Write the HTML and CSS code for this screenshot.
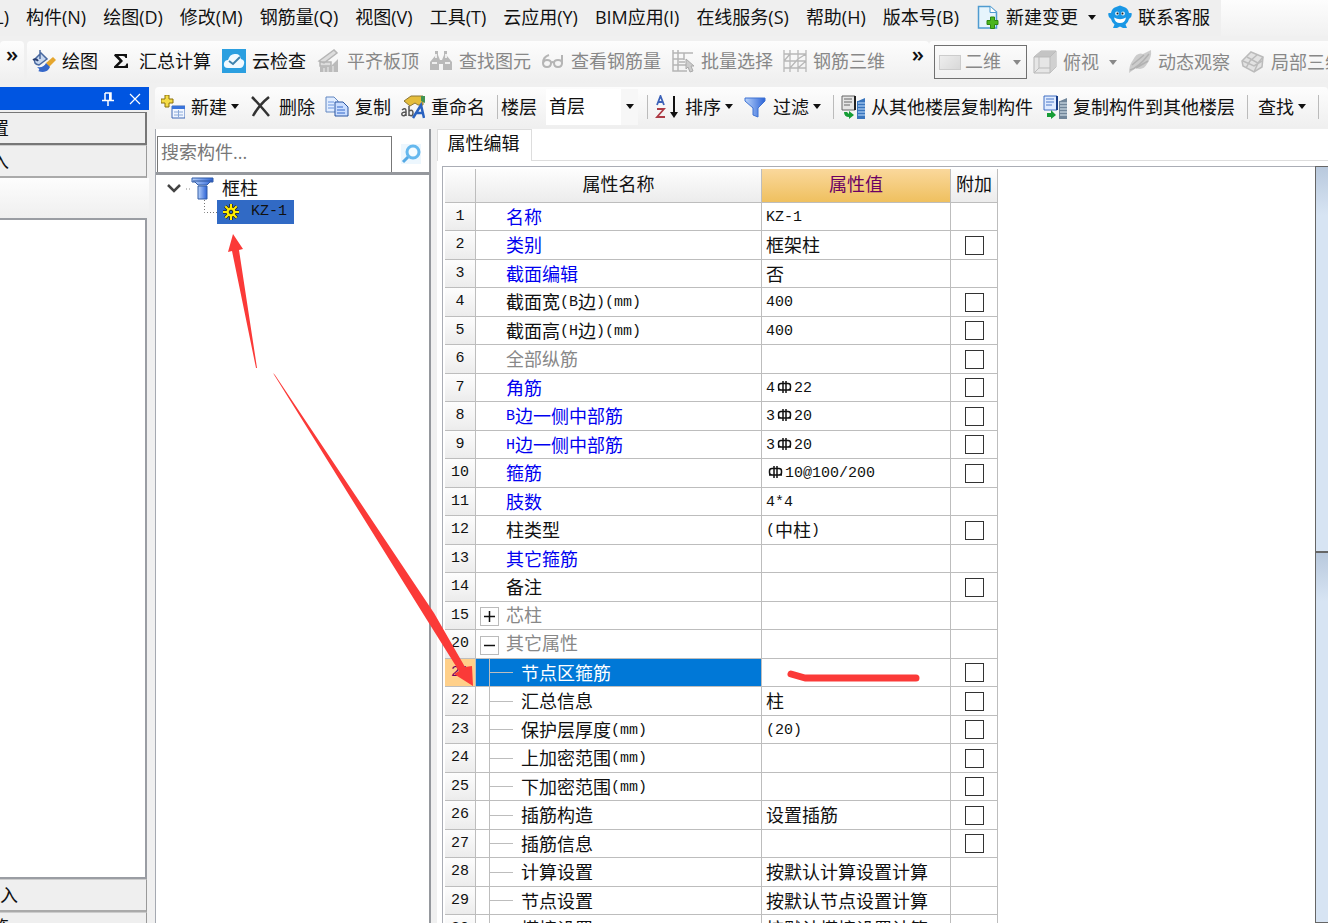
FILE: index.html
```html
<!DOCTYPE html>
<html lang="zh-CN">
<head>
<meta charset="utf-8">
<title>属性编辑</title>
<link rel="stylesheet" href="styles.css">
</head>
<body>
<svg class="defs" aria-hidden="true">
  <defs>
    <linearGradient id="blue" x1="0" x2="1"><stop offset="0" stop-color="#b9d3fb"/><stop offset="1" stop-color="#2c63d6"/></linearGradient>
    <symbol id="rebar" viewBox="0 0 19 16"><path d="M6 4.500H13Q15.500 4.500 15.500 7V8.500Q15.500 11 13 11H6Q3.500 11 3.500 8.500V7Q3.500 4.500 6 4.500ZM8 2V14M11 2V14M3 11H16" fill="none" stroke="#111" stroke-width="1.500"/></symbol>
  </defs>
</svg>

<nav class="menubar">
  <div class="menu-items">
    <button class="cut">L)</button>
    <button>构件(N)</button><button>绘图(D)</button><button>修改(M)</button><button>钢筋量(Q)</button><button>视图(V)</button><button>工具(T)</button><button>云应用(Y)</button><button>BIM应用(I)</button><button>在线服务(S)</button><button>帮助(H)</button><button>版本号(B)</button>
    <button class="tool menu-tool"><svg class="icon" viewBox="0 0 24 24"><path d="M2.500 1.500H14L20.500 7V23H2.500Z" fill="#e6f4fc" stroke="#4f9bd0" stroke-width="1.500"/><path d="M14 1.500V7.500H20.500" fill="#fff" stroke="#4f9bd0"/><path d="M14.500 12H18.500V15.500H22V19.500H18.500V23.500H14.500V19.500H11V15.500H14.500Z" fill="#4cb51c" stroke="#2d8610" stroke-linejoin="round"/></svg>新建变更<i class="caret wide"></i></button>
    <button class="tool"><svg class="icon" viewBox="0 0 24 24"><path d="M3 8Q4 3 8 2L12 0.500L16 2Q20 3 21 8L23.500 8Q24.500 12 21 14Q20 18 17.500 19.500L19 23H15L12 21.500L9 23H5L6.500 19.500Q4 18 3 14Q-0.500 12 0.500 8Z" fill="#1997e5"/><path d="M6 12.500Q12 16 18 12.500Q17 18 12 18Q7 18 6 12.500Z" fill="#fff"/><circle cx="9" cy="8.500" r="2" fill="#d8effc"/><circle cx="15" cy="8.500" r="2" fill="#d8effc"/><circle cx="9.500" cy="8.500" r="1" fill="#222"/><circle cx="14.500" cy="8.500" r="1" fill="#222"/></svg>联系客服</button>
  </div>
</nav>

<div class="toolbar-row">
  <div class="toolbar stub"><button class="more" aria-label="更多">»</button></div>
  <div class="toolbar main-tools">
    <button class="tool"><svg class="icon" viewBox="0 0 24 24"><path d="M8 1V10M3 10L9 4L15 10L7 16Q1 15 3 10Z" fill="#c7d7ef" stroke="#4969a0" stroke-width="1.500"/><path d="M1 11Q4 9 6 12" fill="none" stroke="#283e70" stroke-width="2"/><path d="M14 14L21 8L24 11L17 18Z" fill="#e5a62e"/><path d="M5 18Q12 19 14 14L18 18Q15 25 6 22Q9 21 5 18Z" fill="#3567c9"/></svg>绘图</button>
    <button class="tool"><svg class="icon" viewBox="0 0 24 24"><path d="M6 5H18V9H16.500Q16 7 14 7H9.500L14 12L9 17H15Q17 17 17.500 14.500H19V19H5V17.500L10.500 12L5 6.500Z" fill="#111"/></svg>汇总计算</button>
    <button class="tool"><svg class="icon" viewBox="0 0 24 24"><path d="M0 0H24V24H0Z" fill="#2b9fe0"/><path d="M6 19Q1 19 2 14Q3 11 6 11Q8 4 14 5Q18 5 19 10Q23 11 22 15Q21 19 18 19Z" fill="#f2faff"/><path d="M7 12L11 15L18 8" fill="none" stroke="#3e83ae" stroke-width="2"/></svg>云检查</button>
    <button class="tool" disabled><svg class="icon" viewBox="0 0 24 24"><path d="M2 12L17 1L20 4L7 14ZM3 13H14V17H3Z" fill="#ddd" stroke="#b5b5b5" stroke-width="1.500"/><path d="M3 17H14L21 10V23H3Z" fill="#bbb"/><path d="M7 19V23M11 18V23M16 17V23" stroke="#eee"/></svg>平齐板顶</button>
  </div>
  <div class="toolbar view-tools">
    <button class="tool" disabled><svg class="icon" viewBox="0 0 24 24"><path d="M6 2H9V6L11 11H13L15 6V2H18V7L23 13V21H14V15H10V21H1V13L6 7Z" fill="#b9b9b9"/><path d="M3 14H8M16 14H21M7 5V9M17 5V9" stroke="#eee" stroke-width="2"/></svg>查找图元</button>
    <button class="tool" disabled><svg class="icon" viewBox="0 0 24 24"><path d="M8 6Q2 8 2 14Q2 18 6 18Q10 18 10 14Q10 11 6 11Q3 11 2 14M10 14Q12 12 13 14Q13 18 17 18Q21 18 21 14Q21 11 17 11Q13 11 13 14M21 15V6" fill="none" stroke="#b5b5b5" stroke-width="2"/></svg>查看钢筋量</button>
    <button class="tool" disabled><svg class="icon" viewBox="0 0 24 24"><path d="M2 1V22H16M2 4H22M2 10H13M2 16H15M7 1V22M13 4V11M8 13H14" fill="none" stroke="#b5b5b5" stroke-width="1.500"/><path d="M15 10L23 17H20L22 22L19 23L17 18L15 20Z" fill="#ccc" stroke="#aaa"/></svg>批量选择</button>
    <button class="tool" disabled><svg class="icon" viewBox="0 0 24 24"><path d="M1 1V23M7 1V23M15 1V23M23 1V23M1 5H23M1 12H23M1 19H23M1 12L7 5M7 19L15 10L23 5M15 19L23 12" fill="none" stroke="#b8b8b8" stroke-width="1.300"/></svg>钢筋三维</button>
    <button class="more" aria-label="更多">»</button>
  </div>
  <div class="toolbar camera-tools">
    <label class="mode"><span class="swatch"></span><select disabled aria-label="视图模式"><option>二维</option></select><i class="caret"></i></label>
    <button class="tool" disabled><svg class="icon" viewBox="0 0 24 24"><path d="M1 7L8 1H23V17L17 23H1Z" fill="#e6e6e6" stroke="#b5b5b5"/><path d="M1 7L8 1H23L17 7Z" fill="#c4c4c4"/><path d="M17 7L23 1V17L17 23Z" fill="#d0d0d0"/><path d="M1 7H17V23M17 7L23 1M6 7V18H17M1 23L6 18" fill="none" stroke="#bbb"/></svg>俯视<i class="caret wide"></i></button>
    <button class="tool" disabled><svg class="icon" viewBox="0 0 24 24"><path d="M5 10Q9 2 15 4L23 0Q24 7 19 14Q15 21 8 18L1 23Q1 15 5 10Z" fill="#ccc"/><path d="M2 20Q10 18 21 4M4 15L16 5M8 18L20 11" fill="none" stroke="#b2b2b2" stroke-width="1.500"/></svg>动态观察</button>
    <button class="tool" disabled><svg class="icon" viewBox="0 0 24 24"><path d="M10 2L22 7L21 17L13 22L2 16L1 11Z" fill="#e2e2e2" stroke="#bbb" stroke-width="1.500"/><path d="M6 7L17 13L13 22M16 5L9 11L5 18M2 11L13 16L21 11M17 13L22 7" fill="none" stroke="#bbb" stroke-width="1.500"/></svg>局部三维</button>
  </div>
</div>

<div class="workspace">
  <aside class="modules">
    <header class="dock-title">
      <button aria-label="固定"><svg viewBox="0 0 14 16"><path d="M4 2H10V9M4 2V9M1 9.500H13M7 10V15" fill="none" stroke="#fff" stroke-width="1.500"/><path d="M9 2V9" stroke="#fff" stroke-width="2"/></svg></button>
      <button aria-label="关闭"><svg viewBox="0 0 14 16"><path d="M2 3L12 13M12 3L2 13" stroke="#fff" stroke-width="1.200"/></svg></button>
    </header>
    <button class="module raised"><span class="cut">置</span></button>
    <button class="module"><span class="cut">入</span></button>
    <div class="module-band"></div>
    <div class="module-body"></div>
    <button class="module">入</button>
    <button class="module last"><span class="cut">览</span></button>
  </aside>

  <main class="component">
    <div class="toolbar edit-tools">
      <button class="tool"><svg class="icon" viewBox="0 0 24 24"><path d="M4 0H8V4H12V8H8V12H4V8H0V4H4Z" fill="#f5dc46" stroke="#8b710b"/><path d="M11 11H24V23H11Z" fill="#f1f6ff" stroke="#3e69b5"/><path d="M11 11H24V14H11Z" fill="#3973da"/><path d="M13 17H22M13 20H22M17.500 15V22" stroke="#8aa9d8"/></svg>新建<i class="caret"></i></button>
      <button class="tool"><svg class="icon" viewBox="0 0 24 24"><path d="M3 2Q9 8 20 21M20 2Q10 10 4 21" fill="none" stroke="#333" stroke-width="2.500"/></svg>删除</button>
      <button class="tool"><svg class="icon" viewBox="0 0 24 24"><path d="M1 2H9L13 6V17H1Z" fill="#e1edff" stroke="#6387c1"/><path d="M3 7H9M3 10H9M3 13H9" stroke="#6b95df"/><path d="M10 7H18L23 12V21H10Z" fill="#c9ddff" stroke="#2954a1"/><path d="M12 12H18M12 15H20M12 18H20" stroke="#3569c9"/></svg>复制</button>
      <button class="tool"><svg class="icon" viewBox="0 0 24 24"><path d="M3 6L10 1H22V10H17L14 8L9 11Z" fill="#e5bd3b" stroke="#8c7635"/><path d="M20 1H24V8L20 6Z" fill="#419352"/><path d="M1 15Q5 12 5 16V21M5 17Q0 17 1 20Q3 22 5 19M8 11V21M8 16Q12 14 12 18Q12 22 8 20" fill="none" stroke="#555" stroke-width="1.500"/><path d="M12 23L20 10L23 23M15 18H22" fill="none" stroke="#2962c0" stroke-width="2.500"/></svg>重命名</button>
      <span class="sep"></span>
      <label class="floor">楼层 <span class="floor-box"><select><option>首层</option></select><i class="caret"></i></span></label>
      <span class="sep"></span>
      <button class="tool"><svg class="icon" viewBox="0 0 24 24"><path d="M2 10L5.500 1L9 10M3 7H8" fill="none" stroke="#3c62b8" stroke-width="1.800"/><path d="M2 14H9L2 22H10" fill="none" stroke="#ad3b45" stroke-width="1.800"/><path d="M19 1V20" stroke="#111" stroke-width="2"/><path d="M15 17H23L19 23Z" fill="#111"/></svg>排序<i class="caret"></i></button>
      <button class="tool"><svg class="icon" viewBox="0 0 24 24"><path d="M2 3H22V6L15 13V22L10 20V13L2 6Z" fill="url(#blue)" stroke="#3f73d3"/></svg>过滤<i class="caret"></i></button>
      <span class="sep"></span>
      <button class="tool"><svg class="icon" viewBox="0 0 24 24"><path d="M1 1H14V15H1Z" fill="#e5e5e5" stroke="#666"/><path d="M3 4H11M3 7H11M3 10H9" stroke="#666"/><path d="M14 1V15" stroke="#222" stroke-width="2"/><path d="M3 17H6L8 19V16L13 20L8 24V22Q3 22 3 17Z" fill="#169d36"/><path d="M17 6L24 3V24H16V6Z" fill="#3975bd"/><path d="M17 8H24M17 11H24M17 14H24M17 17H24M17 20H24" stroke="#c6e2ff"/></svg>从其他楼层复制构件</button>
      <button class="tool"><svg class="icon" viewBox="0 0 24 24"><path d="M1 1H14V15H1Z" fill="#dfebff" stroke="#416fc2"/><path d="M3 4H11M3 7H11M3 10H9" stroke="#4c79c7"/><path d="M14 1V15" stroke="#173c86" stroke-width="2"/><path d="M4 14V18H8V15L13 20L8 24V22H4Z" fill="#169d36"/><path d="M17 6L24 3V24H16V6Z" fill="#71869a"/><path d="M17 8H24M17 11H24M17 14H24M17 17H24M17 20H24" stroke="#e1edf5"/></svg>复制构件到其他楼层</button>
      <span class="sep"></span>
      <button class="tool find">查找<i class="caret"></i></button>
      <span class="sep"></span>
    </div>

    <div class="panes">
      <section class="tree-pane">
        <form class="search">
          <input type="search" placeholder="搜索构件..." aria-label="搜索构件">
          <button type="button" aria-label="搜索"><svg class="icon" viewBox="0 0 24 24"><path d="M2 2H22V22H2Z" fill="#edf7fe"/><circle cx="14" cy="10" r="6" fill="#f6fcff" stroke="#65b8ee" stroke-width="3"/><path d="M9 15L4 20" stroke="#55a9e4" stroke-width="3"/></svg></button>
        </form>
        <ul class="tree">
          <li class="root"><svg class="twist" viewBox="0 0 34 24"><path d="M12 9L18 15L24 9" fill="none" stroke="#444" stroke-width="2.500"/><path d="M30 13H34" stroke="#888" stroke-dasharray="1 2"/></svg><svg class="icon" viewBox="0 0 24 24"><path d="M2 2H23V6H20L17 9H8L5 6H2Z" fill="url(#blue)" stroke="#335ca6"/><path d="M3 5H22" stroke="#2c54a0"/><path d="M8 10H17V23H8Z" fill="url(#blue)" stroke="#335ca6"/></svg><span>框柱</span>
            <ul>
              <li class="leaf"><svg class="elbow" viewBox="0 0 14 24"><path d="M1.500 0V12.500H14" fill="none" stroke="#777" stroke-dasharray="1 2"/></svg><span class="leaf-label"><svg class="gear" viewBox="0 0 16 16"><path d="M8 0V16M0 8H16M2.300 2.300L13.700 13.700M13.700 2.300L2.300 13.700" stroke="#222" stroke-width="3.500"/><path d="M8 0V16M0 8H16M2.300 2.300L13.700 13.700M13.700 2.300L2.300 13.700" stroke="#ffed00" stroke-width="2"/><circle cx="8" cy="8" r="4.500" fill="#ffed00"/><circle cx="8" cy="8" r="1.800" fill="#316ac5" stroke="#222"/></svg><span class="mono">KZ-1</span></span></li>
            </ul>
          </li>
        </ul>
      </section>

      <section class="props">
        <div class="tabs"><button class="tab">属性编辑</button><span class="tab-line"></span></div>
        <div class="props-body">
          <div class="grid-wrap">
            <table class="grid">
              <colgroup><col class="c-num"><col class="c-name"><col class="c-value"><col class="c-add"></colgroup>
              <thead><tr><th></th><th>属性名称</th><th class="hot">属性值</th><th>附加</th></tr></thead>
              <tbody>
                <tr><th>1</th><td class="key">名称</td><td><span class="mono">KZ-1</span></td><td></td></tr>
                <tr><th>2</th><td class="key">类别</td><td>框架柱</td><td><input type="checkbox" aria-label="附加 类别"></td></tr>
                <tr><th>3</th><td class="key">截面编辑</td><td>否</td><td></td></tr>
                <tr><th>4</th><td>截面宽<span class="mono">(B</span>边<span class="mono">)(mm)</span></td><td><span class="mono">400</span></td><td><input type="checkbox" aria-label="附加 截面宽"></td></tr>
                <tr><th>5</th><td>截面高<span class="mono">(H</span>边<span class="mono">)(mm)</span></td><td><span class="mono">400</span></td><td><input type="checkbox" aria-label="附加 截面高"></td></tr>
                <tr><th>6</th><td class="dim">全部纵筋</td><td></td><td><input type="checkbox" aria-label="附加 全部纵筋"></td></tr>
                <tr><th>7</th><td class="key">角筋</td><td><span class="mono">4<svg class="rebar"><use href="#rebar"/></svg>22</span></td><td><input type="checkbox" aria-label="附加 角筋"></td></tr>
                <tr><th>8</th><td class="key"><span class="mono">B</span>边一侧中部筋</td><td><span class="mono">3<svg class="rebar"><use href="#rebar"/></svg>20</span></td><td><input type="checkbox" aria-label="附加 B边一侧中部筋"></td></tr>
                <tr><th>9</th><td class="key"><span class="mono">H</span>边一侧中部筋</td><td><span class="mono">3<svg class="rebar"><use href="#rebar"/></svg>20</span></td><td><input type="checkbox" aria-label="附加 H边一侧中部筋"></td></tr>
                <tr><th>10</th><td class="key">箍筋</td><td><span class="mono"><svg class="rebar"><use href="#rebar"/></svg>10@100/200</span></td><td><input type="checkbox" aria-label="附加 箍筋"></td></tr>
                <tr><th>11</th><td class="key">肢数</td><td><span class="mono">4*4</span></td><td></td></tr>
                <tr><th>12</th><td>柱类型</td><td><span class="mono">(</span>中柱<span class="mono">)</span></td><td><input type="checkbox" aria-label="附加 柱类型"></td></tr>
                <tr><th>13</th><td class="key">其它箍筋</td><td></td><td></td></tr>
                <tr><th>14</th><td>备注</td><td></td><td><input type="checkbox" aria-label="附加 备注"></td></tr>
                <tr><th>15</th><td class="dim group"><button class="fold" aria-label="展开"><svg viewBox="0 0 17 17"><path d="M3 8.500H14M8.500 3V14" stroke="#111" stroke-width="1.500"/></svg></button>芯柱</td><td></td><td></td></tr>
                <tr><th>20</th><td class="dim group"><button class="fold" aria-label="折叠"><svg viewBox="0 0 17 17"><path d="M3 8.500H14" stroke="#111" stroke-width="1.500"/></svg></button>其它属性</td><td></td><td></td></tr>
                <tr class="selected"><th>21</th><td class="child">节点区箍筋</td><td></td><td><input type="checkbox" aria-label="附加 节点区箍筋"></td></tr>
                <tr><th>22</th><td class="child">汇总信息</td><td>柱</td><td><input type="checkbox" aria-label="附加 汇总信息"></td></tr>
                <tr><th>23</th><td class="child">保护层厚度<span class="mono">(mm)</span></td><td><span class="mono">(20)</span></td><td><input type="checkbox" aria-label="附加 保护层厚度"></td></tr>
                <tr><th>24</th><td class="child">上加密范围<span class="mono">(mm)</span></td><td></td><td><input type="checkbox" aria-label="附加 上加密范围"></td></tr>
                <tr><th>25</th><td class="child">下加密范围<span class="mono">(mm)</span></td><td></td><td><input type="checkbox" aria-label="附加 下加密范围"></td></tr>
                <tr><th>26</th><td class="child">插筋构造</td><td>设置插筋</td><td><input type="checkbox" aria-label="附加 插筋构造"></td></tr>
                <tr><th>27</th><td class="child">插筋信息</td><td></td><td><input type="checkbox" aria-label="附加 插筋信息"></td></tr>
                <tr><th>28</th><td class="child">计算设置</td><td>按默认计算设置计算</td><td></td></tr>
                <tr><th>29</th><td class="child">节点设置</td><td>按默认节点设置计算</td><td></td></tr>
                <tr><th>30</th><td class="child">搭接设置</td><td>按默认搭接设置计算</td><td></td></tr>
              </tbody>
            </table>
          </div>
          <div class="viewports"><div class="viewport"></div><div class="viewport"></div></div>
        </div>
      </section>
    </div>
  </main>
</div>

<svg class="notes" viewBox="0 0 1328 923" aria-hidden="true">
  <path d="M233 234L243 249L239 250L257 368H256L232 251L228 252Z" fill="#fb3a38"/>
  <path d="M273 373L275 375L434 613L465 667L472 666L473 686L454 674L459 671L427 620Z" fill="#fb3a38"/>
  <path d="M791 674L805 678H916" fill="none" stroke="#fb3a38" stroke-width="7" stroke-linecap="round" stroke-linejoin="round"/>
</svg>
</body>
</html>
```

FILE: styles.css
```css
* { box-sizing: border-box; }

body {
  margin: 0;
  height: 100vh;
  overflow: hidden;
  display: flex;
  flex-direction: column;
  background: #f0f0f0;
  color: #111;
  font: 18px/24px "Open Sans", "Noto Sans CJK SC", sans-serif;
}

button, input, select { font: inherit; color: inherit; }
button { border: 0; padding: 0; background: none; white-space: nowrap; }
ul { list-style: none; margin: 0; padding: 0; }
svg { flex: none; }

.defs { position: absolute; width: 0; height: 0; }
.icon { width: 24px; height: 24px; }
.mono { font-family: "Liberation Mono", monospace; font-size: 15px; }
.cut { display: flex; justify-content: flex-end; width: 9px; overflow: hidden; }

.caret {
  border: 4px solid transparent;
  border-top: 5px solid currentColor;
  border-bottom: 0;
  margin-left: -2px;
}
.caret.wide { margin-left: 4px; }

/* Menu bar */
.menubar { height: 36px; flex: none; background: linear-gradient(#fdfdfd, #f1f1f1); display: flex; }
.menu-items { display: flex; align-items: center; gap: 17px; padding: 0 11px 2px 0; background: #efefef; flex: none; }
.menu-tool { margin: 0 -5px 0 0; }

/* Toolbars */
.toolbar-row { display: flex; flex: none; height: 51px; padding: 5px 0 4px; overflow: hidden; }
.toolbar { display: flex; align-items: center; background: linear-gradient(#fdfdfd, #efefef); border-radius: 4px; flex: none; }
.tool { display: flex; align-items: center; gap: 6px; flex: none; }
.tool:disabled { color: #888; }
.more { align-self: flex-start; font-size: 22px; font-weight: 600; line-height: 24px; }
.stub { width: 24px; margin-right: 3px; padding-left: 6px; }
.main-tools { gap: 11px; padding: 0 10px 2px 5px; border-radius: 4px 0 0 4px; }
.view-tools { gap: 10px; padding: 0 5px 2px 0; width: 500px; border-radius: 0 4px 4px 0; }
.view-tools .more { margin-left: auto; }
.camera-tools { gap: 11px; padding-left: 5px; flex: 1 0 auto; }
.mode { display: flex; align-items: center; width: 93px; height: 34px; margin-right: -5px; padding: 0 5px 0 4px; border: 1px solid #707070; color: #888; }
.swatch { width: 22px; height: 15px; border: 1px solid #ccc; background: linear-gradient(135deg, #eee, #d8d8d8); }
.mode select { appearance: none; border: 0; background: none; flex: 1; min-width: 0; padding: 0 0 2px 4px; color: #888; opacity: 1; }

.workspace { flex: 1; min-height: 0; display: flex; }

/* Module dock */
.modules { width: 149px; margin-right: 6px; flex: none; display: flex; flex-direction: column; }
.dock-title { height: 23px; flex: none; background: #0055e1; display: flex; justify-content: flex-end; align-items: center; gap: 13px; padding-right: 7px; margin-bottom: 2px; }
.dock-title button { width: 14px; height: 16px; display: flex; }
.module { height: 33px; flex: none; margin-right: 2px; text-align: left; background: #efefef; border-right: 1px solid #999; border-bottom: 2px solid #aaa; border-top: 1px solid #ccc; }
.raised { border-right: 2px solid #777; border-bottom-color: #777; border-top-color: #777; }
.module-band { height: 40px; flex: none; background: linear-gradient(#fdfdfd, #efefef); }
.module-body { flex: 1; margin-right: 2px; background: #fff; border: 2px solid #9a9da3; border-left: 0; }
.last { height: 11px; overflow: hidden; border-bottom: 0; padding-top: 2px; }

/* Component area */
.component { flex: 1; min-width: 0; display: flex; flex-direction: column; }
.edit-tools { height: 41px; margin-bottom: 1px; padding: 0 0 2px 6px; gap: 10px; overflow: hidden; }
.sep { width: 1px; height: 24px; margin-left: 2px; background: #bbb; flex: none; }
.edit-tools .sep + .tool { margin-left: -3px; }
.edit-tools .sep + .find { margin-left: 0; }
.floor { display: flex; align-items: center; gap: 9px; margin: 0 -3px 0 -7px; }
.floor-box { display: flex; align-items: center; width: 92px; height: 36px; padding-right: 4px; background: linear-gradient(90deg, #fff 75px, #f7f7f7 75px); }
.floor-box select { appearance: none; border: 0; background: none; padding: 0 0 2px 3px; flex: 1; min-width: 0; }

.panes { flex: 1; min-height: 0; display: flex; }
.tree-pane { width: 276px; margin-right: 6px; flex: none; display: flex; flex-direction: column; background: #fff; border-right: 2px solid #95989d; border-left: 1px solid #a5a9b1; }
.search { display: flex; margin: 0; padding: 7px 0 0 1px; border-bottom: 3px solid #95989d; }
.search input { width: 235px; height: 36px; border: 1px solid #777; border-bottom: 0; border-radius: 0; padding: 0 3px 6px; outline: 0; }
.search input::placeholder { color: #777; opacity: 1; }
.search button { flex: 1; display: flex; align-items: center; justify-content: center; }
.root { display: grid; grid-template-columns: 34px 32px 1fr; align-items: center; padding-top: 1px; }
.twist { width: 34px; height: 24px; }
.root ul { grid-column: 1 / -1; padding-left: 47px; }
.leaf { display: flex; }
.elbow { width: 14px; height: 24px; }
.leaf-label { display: flex; align-items: center; gap: 12px; height: 24px; padding: 0 7px 0 6px; background: #316ac5; }
.gear { width: 16px; height: 16px; }

/* Property editor */
.props { flex: 1; min-width: 0; display: flex; flex-direction: column; background: #fff; }
.tabs { display: flex; height: 32px; flex: none; }
.tab { width: 95px; border: 1px solid #ddd; border-bottom: 0; padding: 0 2px 5px 0; }
.tab-line { flex: 1; border-bottom: 1px solid #ddd; }
.props-body { flex: 1; min-height: 0; display: flex; margin: 5px 0 0 5px; }
.grid-wrap { flex: 1; min-width: 0; overflow: hidden; border-top: 1px solid #aaadb5; border-left: 1px solid #aaadb5; padding: 2px 0 0 2px; }
.grid { table-layout: fixed; width: 553px; border-collapse: separate; border-spacing: 0; line-height: 20px; }
.c-num { width: 31px; }
.c-name { width: 286px; }
.c-value { width: 189px; }
.c-add { width: 47px; }
.grid th, .grid td { border-right: 1px solid #bdbdbd; border-bottom: 1px solid #bdbdbd; padding: 0; white-space: nowrap; height: 28px; }
.grid tbody tr:nth-child(even) > * { height: 29px; }
.grid th { font-weight: 400; background: linear-gradient(#fdfdfd, #ececec); }
.grid thead th { height: 34px; padding-bottom: 3px; }
.grid thead .hot { background: linear-gradient(#fad89c, #efc05f); color: #6b0064; }
.grid tbody th { font: 15px/20px "Liberation Mono", monospace; }
.grid .mono { line-height: 12px; vertical-align: 3px; }
.grid td:nth-child(2) { padding-left: 30px; }
.grid td:nth-child(3) { padding-left: 4px; }
.grid td:nth-child(4) { text-align: center; }
.grid .key { color: #0000f0; }
.grid .dim { color: #888; }
.grid td.group { padding-left: 4px; }
.fold { width: 19px; height: 19px; border: 1px solid #bbb; background: #fff; margin-right: 7px; display: inline-flex; vertical-align: middle; }
.grid td.child {
  padding-left: 45px;
  background-image: linear-gradient(#bdbdbd, #bdbdbd), linear-gradient(#bdbdbd, #bdbdbd);
  background-repeat: no-repeat;
  background-size: 1px 100%, 24px 1px;
  background-position: 13px 0, 13px 50%;
}
.grid .selected .child { background-color: #0078d7; color: #fff; }
.grid .selected th { background: #ffd08a; color: #6b0064; }
.grid input { appearance: none; display: block; width: 19px; height: 19px; margin: 0 auto; border: 1px solid #333; background: #fff; }
.rebar { width: 19px; height: 16px; vertical-align: -3px; }

.viewports { width: 13px; flex: none; display: flex; flex-direction: column; }
.viewport { flex: 1; border: 1px solid #666; border-right: 0; background: linear-gradient(#b9c9dd, #d7e4f3 48px); }
.viewport:first-child { flex: none; height: 51%; }

/* Hand-drawn marks over the window */
.notes { position: absolute; left: 0; top: 0; width: 1328px; height: 923px; pointer-events: none; }
```
